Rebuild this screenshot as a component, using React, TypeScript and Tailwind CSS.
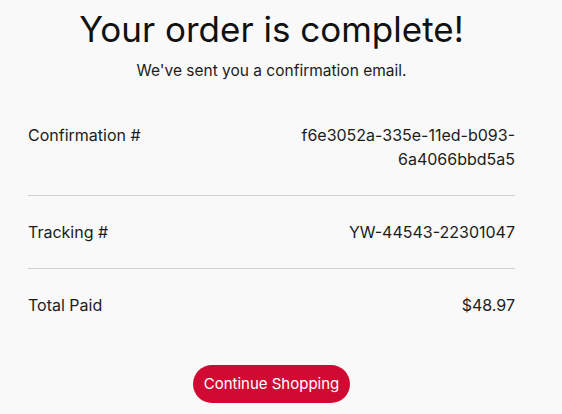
import React from 'react';

const rows = [
  { label: 'Confirmation #', value: 'f6e3052a-335e-11ed-b093-6a4066bbd5a5' },
  { label: 'Tracking #', value: 'YW-44543-22301047' },
  { label: 'Total Paid', value: '$48.97' },
];

export default function App() {
  return (
    <div className="min-h-screen bg-[#f9f9f9] text-[#1c1c1c] font-['Inter','Liberation_Sans',sans-serif]">
      <div className="ml-[28px] w-[487px] pt-[7px] flex flex-col items-center">
        <h1 className="text-[35px] leading-[44px] text-[#111]">Your order is complete!</h1>
        <p className="mt-[10px] text-[15.5px] leading-[20px]">We've sent you a confirmation email.</p>
        <div className="mt-[18px] w-full">
          {rows.map((r, i) => (
            <div
              key={r.label}
              className={`flex justify-between py-6 text-[16px] leading-[24px] ${i < rows.length - 1 ? 'border-b border-[#cfcfcf]' : ''}`}
            >
              <span>{r.label}</span>
              <span className="w-[230px] text-right">{r.value}</span>
            </div>
          ))}
        </div>
        <button className="mt-[24px] h-[38px] w-[157px] rounded-full bg-[#d00a33] text-white text-[15px]">
          Continue Shopping
        </button>
      </div>
    </div>
  );
}
